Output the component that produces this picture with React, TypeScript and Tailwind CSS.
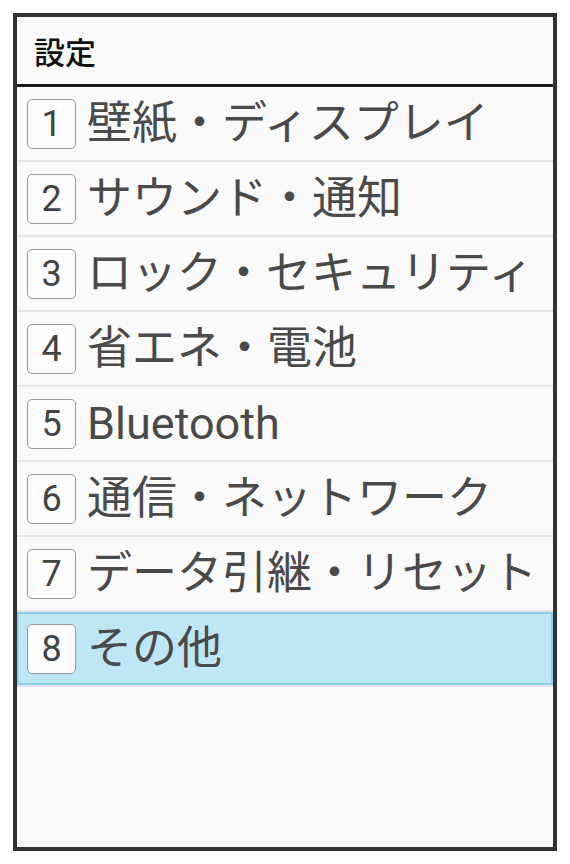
import React from "react";

const items = [
  "壁紙・ディスプレイ",
  "サウンド・通知",
  "ロック・セキュリティ",
  "省エネ・電池",
  "Bluetooth",
  "通信・ネットワーク",
  "データ引継・リセット",
  "その他",
];

export default function App() {
  return (
    <div
      className="w-[570px] h-[864px] bg-white pt-[13px] pl-[13px]"
      style={{ fontFamily: 'Roboto, "Noto Sans CJK JP", sans-serif' }}
    >
      <div className="w-[544px] h-[838px] border-4 border-[#333333] bg-[#fafafa] flex flex-col">
        <div className="h-[70px] flex items-center pl-[17px] border-b-[3px] border-[#1a1a1a] shrink-0">
          <span
            className="text-[31px] leading-none text-[#111111] font-medium"
            style={{ fontFamily: '"Noto Sans CJK JP", sans-serif' }}
          >
            設定
          </span>
        </div>
        {items.map((label, i) => {
          const selected = i === 7;
          return (
            <div key={i} className="h-[75px] border-b-[2.5px] border-[#e4e4e4] shrink-0">
              <div
                className={
                  selected
                    ? "h-full flex items-center pl-[8px] border-2 border-[#8dd0ee] bg-[#bfe6f5]"
                    : "h-full flex items-center pl-[10px]"
                }
              >
                <div className="w-[49px] h-[50px] rounded-[5px] border-[1.5px] border-[#9a9a9a] bg-[#fdfdfd] flex items-center justify-center shrink-0">
                  <span className="text-[36px] leading-none text-[#444444]" style={{ fontFamily: "Roboto, sans-serif" }}>
                    {i + 1}
                  </span>
                </div>
                <span className="ml-[11px] text-[45px] leading-none text-[#4a4a4a] whitespace-nowrap">
                  {label}
                </span>
              </div>
            </div>
          );
        })}
      </div>
    </div>
  );
}
